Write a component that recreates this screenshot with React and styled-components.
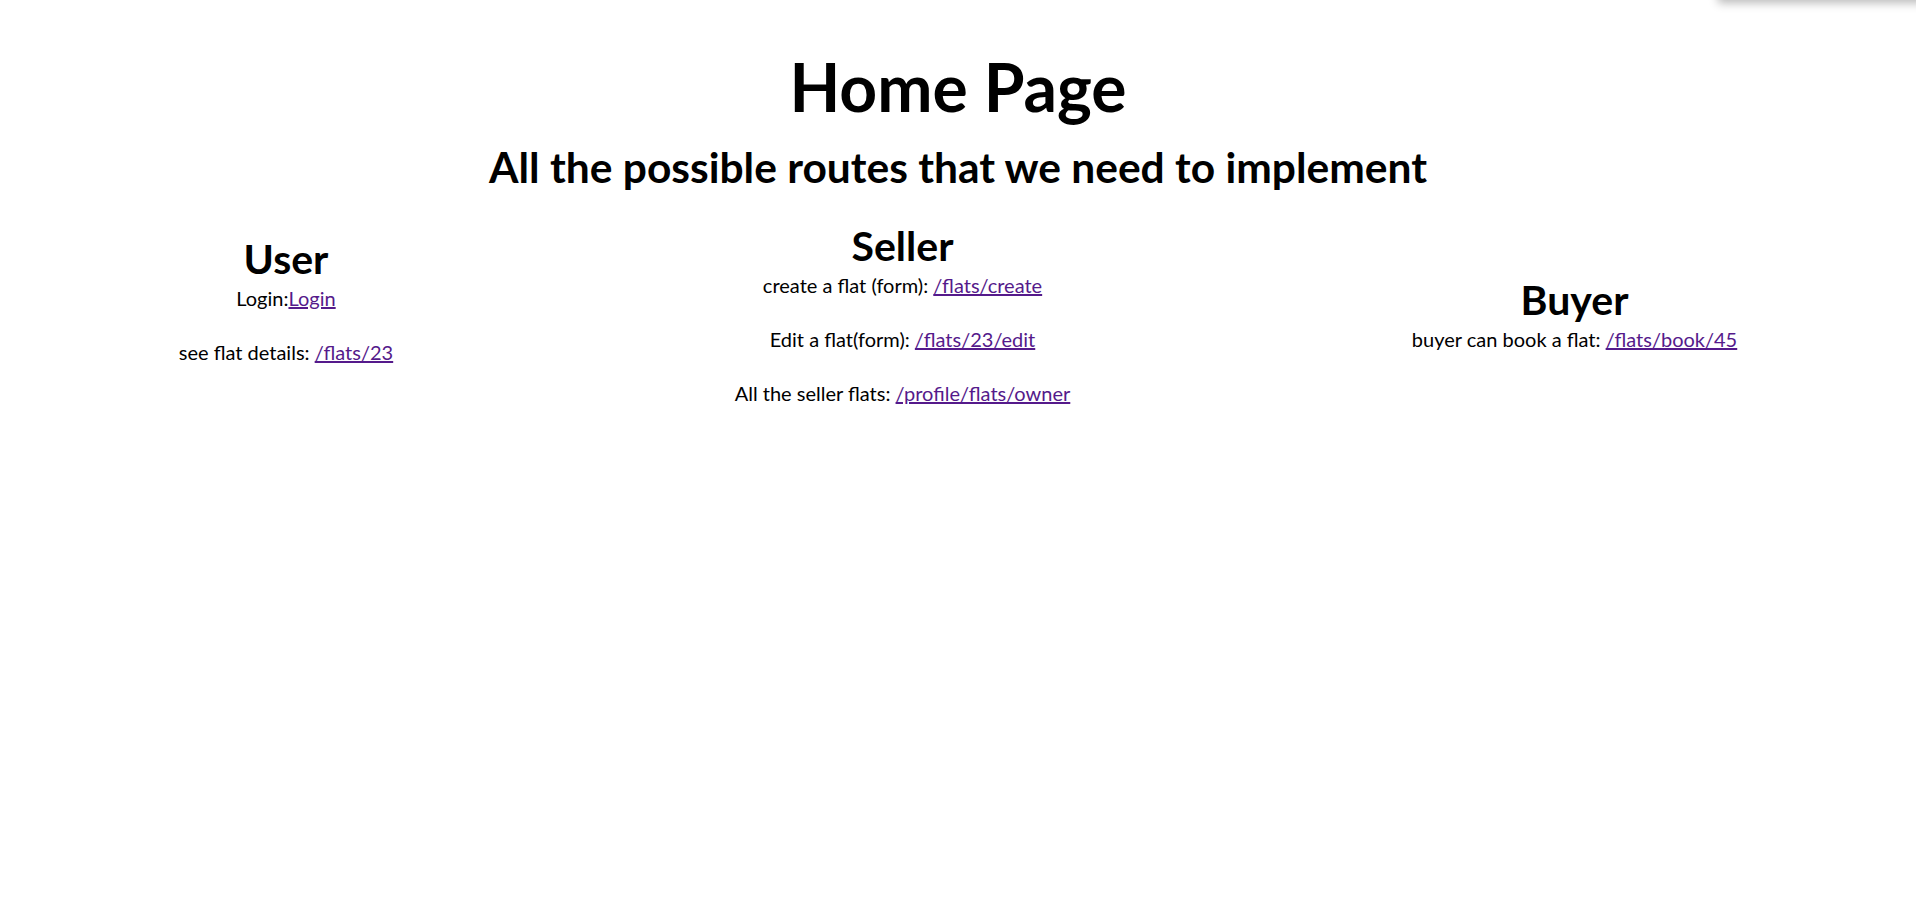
import React from 'react';
import styled, { createGlobalStyle } from 'styled-components';

const GlobalStyle = createGlobalStyle`
  html, body {
    background: #ffffff;
  }

  body {
    margin: 8px;
    font-family: Lato, "Open Sans", sans-serif;
    color: #000000;
    overflow: hidden;
  }
`;

const Page = styled.div`
  text-align: center;
`;

const PopupEdge = styled.div`
  position: fixed;
  top: -60px;
  right: -20px;
  width: 218px;
  height: 60px;
  background: #ffffff;
  box-shadow: 0 3px 9px rgba(0, 0, 0, 0.28);
`;

const Title = styled.h1`
  font-size: 66px;
  font-weight: 700;
  line-height: 1.2;
  margin: 39px 0 0;
`;

const Subtitle = styled.h2`
  font-size: 42.5px;
  font-weight: 700;
  line-height: 1.2;
  margin: 15px 0 0;
`;

const Columns = styled.div`
  display: flex;
  justify-content: space-around;
  align-items: center;
  margin-top: 29px;
`;

const Column = styled.section`
  display: flex;
  flex-direction: column;
  align-items: center;
  padding-bottom: ${(p) => (p.$tail ? '28px' : '0')};
`;

const ColumnTitle = styled.h2`
  font-size: 41px;
  font-weight: 700;
  line-height: 1.2;
  margin: 0;
`;

const Route = styled.p`
  font-size: 20px;
  line-height: 31px;
  margin: 0 0 23px;
  white-space: nowrap;
`;

const RouteLink = styled.a`
  color: #551a8b;
  text-decoration: underline;
`;

const sections = [
  {
    title: 'User',
    tail: true,
    routes: [
      { label: 'Login:', href: '/login', text: 'Login' },
      { label: 'see flat details: ', href: '/flats/23', text: '/flats/23' },
    ],
  },
  {
    title: 'Seller',
    routes: [
      { label: 'create a flat (form): ', href: '/flats/create', text: '/flats/create' },
      { label: 'Edit a flat(form): ', href: '/flats/23/edit', text: '/flats/23/edit' },
      { label: 'All the seller flats: ', href: '/profile/flats/owner', text: '/profile/flats/owner' },
    ],
  },
  {
    title: 'Buyer',
    routes: [
      { label: 'buyer can book a flat: ', href: '/flats/book/45', text: '/flats/book/45' },
    ],
  },
];

const App = () => {
  return (
    <Page>
      <GlobalStyle />
      <PopupEdge />
      <Title>Home Page</Title>
      <Subtitle>All the possible routes that we need to implement</Subtitle>
      <Columns>
        {sections.map((section) => (
          <Column key={section.title} $tail={section.tail}>
            <ColumnTitle>{section.title}</ColumnTitle>
            {section.routes.map((route) => (
              <Route key={route.href}>
                {route.label}
                <RouteLink href={route.href} onClick={(e) => e.preventDefault()}>
                  {route.text}
                </RouteLink>
              </Route>
            ))}
          </Column>
        ))}
      </Columns>
    </Page>
  );
};

export default App;
